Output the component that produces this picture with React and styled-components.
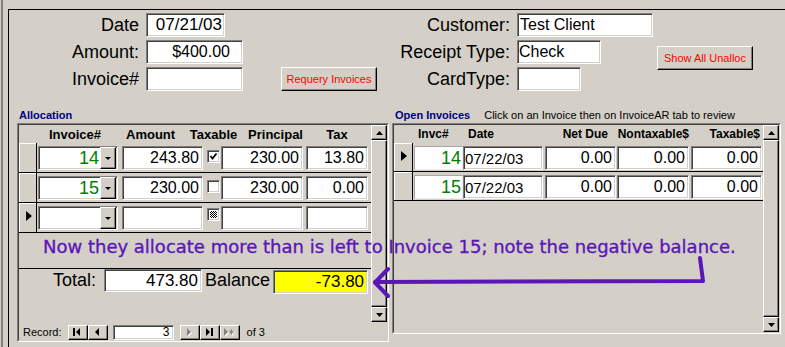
import React from "react"
import styled, { createGlobalStyle, css } from "styled-components"

const GlobalStyle = createGlobalStyle`
  html, body {
    margin: 0;
    padding: 0;
    background: #d4d0c8;
  }
  body {
    font-family: "Liberation Sans", Arial, sans-serif;
    overflow: hidden;
  }
  * {
    box-sizing: border-box;
  }
`

// classic 3D edges
const raised = css`
  background: #d4d0c8;
  border: 1px solid;
  border-color: #fff #000 #000 #fff;
  box-shadow: inset -1px -1px #808080;
`

const sunken = css`
  background: #fff;
  border: 1px solid;
  border-color: #808080 #fff #fff #808080;
  box-shadow: inset 1px 1px #404040, inset -1px -1px #d4d0c8;
`

const Screen = styled.div`
  position: relative;
  width: 785px;
  height: 347px;
  padding-left: 1px;
  overflow: hidden;
`

const Edge = styled.div`
  height: 100%;
  border-left: 2px solid #808080;
  padding: 9px 0 0 5px;
`

const Form = styled.div`
  height: 100%;
  border-top: 1px solid #000;
  border-left: 1px solid #000;
`

const TopArea = styled.div`
  display: flex;
  align-items: flex-start;
  padding-top: 3px;
`

const FieldGrid = styled.div`
  display: grid;
  grid-template-columns: 130px max-content;
  grid-auto-rows: 24px;
  column-gap: 7px;
  row-gap: 3px;
  align-items: center;
  margin-left: ${({ $ml }) => $ml}px;
`

const Label = styled.span`
  justify-self: end;
  font-size: 18px;
  line-height: 24px;
  white-space: nowrap;
`

const Field = styled.div`
  ${sunken};
  flex: none;
  justify-self: start;
  width: ${({ $w }) => $w}px;
  height: ${({ $h }) => $h || 24}px;
  margin-left: ${({ $ml }) => $ml || 0}px;
  margin-top: ${({ $mt }) => $mt || 0}px;
  display: flex;
  align-items: center;
  justify-content: ${({ $left }) => ($left ? "flex-start" : "flex-end")};
  padding: 0 ${({ $pr }) => ($pr === undefined ? 3 : $pr)}px 0 ${({ $pl }) => ($pl === undefined ? 3 : $pl)}px;
  font-size: ${({ $fs }) => $fs || 16}px;
  color: ${({ $green }) => ($green ? "#008000" : "#000")};
  background: ${({ $bg }) => $bg || "#fff"};
  white-space: nowrap;
  overflow: hidden;
  ${({ $flat }) =>
    $flat &&
    css`
      border-color: #a8a8a8 #ececec #ececec #a8a8a8;
      box-shadow: none;
    `}
`

const CmdButton = styled.button`
  ${raised};
  flex: none;
  width: 96px;
  height: 24px;
  margin: ${({ $mt }) => $mt}px 0 0 ${({ $ml }) => $ml}px;
  padding: 0;
  color: #ff0000;
  font-family: "Liberation Sans", Arial, sans-serif;
  font-size: 11px;
`

const Panels = styled.div`
  display: flex;
  align-items: flex-start;
  margin: 17px 0 0 8px;
`

const Panel = styled.section`
  display: flex;
  flex-direction: column;
  flex: none;
  width: ${({ $w }) => $w}px;
  margin-left: ${({ $ml }) => $ml || 0}px;
`

const PanelTitle = styled.div`
  height: 15px;
  display: flex;
  align-items: baseline;
  gap: 14px;
  padding-left: ${({ $pl }) => $pl}px;
  font-size: 11px;
  line-height: 15px;
  white-space: nowrap;
`

const TitleText = styled.span`
  color: #000080;
  font-weight: bold;
`

const Frame = styled.div`
  height: ${({ $h }) => $h}px;
  border: 1px solid;
  border-color: #808080 #fff #fff #808080;
`

const FrameInner = styled.div`
  height: 100%;
  display: flex;
  flex-direction: column;
  border: 1px solid;
  border-color: #404040 #d4d0c8 #d4d0c8 #404040;
`

const Body = styled.div`
  flex: 1;
  min-height: 0;
  display: flex;
`

const Sheet = styled.div`
  flex: 1;
  min-width: 0;
  display: flex;
  flex-direction: column;
`

const Detail = styled.div`
  height: ${({ $h }) => $h}px;
  display: flex;
  flex-direction: column;
`

const HeaderRow = styled.div`
  height: 18px;
  flex: none;
  display: flex;
  align-items: center;
  font-size: ${({ $fs }) => $fs}px;
  font-weight: bold;
`

const HeadCell = styled.div`
  flex: none;
  width: ${({ $w }) => $w}px;
  margin-left: ${({ $ml }) => $ml}px;
  display: flex;
  justify-content: ${({ $align }) => $align};
  padding: 0 ${({ $pr }) => $pr || 0}px 0 ${({ $pl }) => $pl || 0}px;
  white-space: nowrap;
`

const Row = styled.div`
  height: ${({ $h }) => $h}px;
  flex: none;
  display: flex;
  align-items: flex-start;
  border-bottom: 1px solid #000;
`

const Selector = styled.div`
  flex: none;
  width: ${({ $w }) => $w}px;
  align-self: stretch;
  border-right: 1px solid #000;
  box-shadow: inset 1px 1px #fff;
  padding: 4px 0 0 7px;
`

const SelectorBlank = styled.div`
  flex: none;
  width: ${({ $w }) => $w}px;
`

const DropButton = styled.div`
  ${raised};
  flex: none;
  width: 16px;
  height: 22px;
  margin-left: 1px;
  display: flex;
  align-items: center;
  justify-content: center;
  &::after {
    content: "";
    border-left: 3px solid transparent;
    border-right: 3px solid transparent;
    border-top: 3px solid #000;
  }
`

const CheckBox = styled.div`
  flex: none;
  width: 13px;
  height: 13px;
  margin: ${({ $mt }) => $mt}px 0 0 ${({ $ml }) => $ml}px;
  border: 1px solid;
  border-color: #808080 #fff #fff #808080;
  box-shadow: inset 1px 1px #404040, inset -1px -1px #d4d0c8;
  background: #fff;
  display: flex;
  align-items: center;
  justify-content: center;
`

const NullFill = styled.div`
  width: 7px;
  height: 7px;
  background-image: repeating-conic-gradient(#000 0 25%, #fff 0 50%);
  background-size: 2px 2px;
`

const Footer = styled.div`
  flex: 1;
  display: flex;
  align-items: flex-start;
  border-top: 1px solid #000;
`

const FooterLabel = styled.span`
  flex: none;
  width: ${({ $w }) => $w}px;
  margin-left: ${({ $ml }) => $ml || 0}px;
  text-align: right;
  padding-right: ${({ $pr }) => $pr || 0}px;
  font-size: 18px;
  line-height: 23px;
  white-space: nowrap;
`

const ScrollBar = styled.div`
  flex: none;
  width: 16px;
  display: flex;
  flex-direction: column;
`

const ScrollBtn = styled.div`
  ${raised};
  height: 15px;
  flex: none;
  display: flex;
  align-items: center;
  justify-content: center;
`

const Thumb = styled.div`
  ${raised};
  flex: 1;
`

const RecordBar = styled.div`
  height: 18px;
  flex: none;
  display: flex;
  align-items: flex-start;
  padding: 3px 0 0 4px;
  font-size: 11px;
  line-height: 15px;
`

const NavText = styled.span`
  margin-left: ${({ $ml }) => $ml || 0}px;
  white-space: nowrap;
`

const NavButton = styled.div`
  ${raised};
  flex: none;
  width: 20px;
  height: 15px;
  margin-left: ${({ $ml }) => $ml || 0}px;
  display: flex;
  align-items: center;
  justify-content: center;
`

const NavBox = styled.div`
  ${sunken};
  flex: none;
  width: 61px;
  height: 15px;
  margin-left: 5px;
  padding-right: 3px;
  text-align: right;
  font-size: 12px;
  line-height: 13px;
`

const Note = styled.div`
  position: absolute;
  left: 43px;
  top: 236px;
  font-family: "DejaVu Sans", Verdana, sans-serif;
  font-size: 18px;
  line-height: 21px;
  color: #5b16b8;
  -webkit-text-stroke: 0.35px #5b16b8;
  white-space: nowrap;
`

const Callout = styled.svg`
  position: absolute;
  left: 0;
  top: 0;
  pointer-events: none;
`

const allocCols = [
  { ml: 1, w: 80, head: "Invoice#", align: "center", pr: 6 },
  { ml: 4, w: 81, head: "Amount", align: "flex-start", pl: 4 },
  { ml: 4, w: 13, head: "Taxable", align: "center" },
  { ml: 1, w: 82, head: "Principal", align: "flex-end", pr: -2 },
  { ml: 3, w: 62, head: "Tax", align: "center" },
]

const openCols = [
  { ml: 1, w: 49, head: "Invc#", align: "flex-start", pl: 4 },
  { ml: 0, w: 80, head: "Date", align: "flex-start", pl: 5 },
  { ml: 2, w: 71, head: "Net Due", align: "flex-end", pr: 8 },
  { ml: 1, w: 72, head: "Nontaxable$", align: "flex-end", pr: -2 },
  { ml: 2, w: 71, head: "Taxable$", align: "flex-end", pr: 2 },
]

const allocRows = [
  { inv: "14", amount: "243.80", taxable: "on", principal: "230.00", tax: "13.80", mt: 7 },
  { inv: "15", amount: "230.00", taxable: "off", principal: "230.00", tax: "0.00", mt: 7 },
  { inv: "", amount: "", taxable: "null", principal: "", tax: "", mt: 5, current: true },
]

const openRows = [
  { inv: "14", date: "07/22/03", current: true },
  { inv: "15", date: "07/22/03" },
]

const Marker = () => (
  <svg width="6" height="10" viewBox="0 0 6 10">
    <polygon points="0,0 6,5 0,10" fill="#000" />
  </svg>
)

const Arrow = ({ up }) => (
  <svg width="7" height="4" viewBox="0 0 7 4">
    <polygon points={up ? "0,4 3.5,0 7,4" : "0,0 3.5,4 7,0"} fill="#000" />
  </svg>
)

const Scroller = () => (
  <ScrollBar>
    <ScrollBtn>
      <Arrow up />
    </ScrollBtn>
    <Thumb />
    <ScrollBtn>
      <Arrow />
    </ScrollBtn>
  </ScrollBar>
)

const glyphs = {
  first: (
    <>
      <rect x="1" y="0" width="2" height="8" />
      <polygon points="8,0 4,4 8,8" />
    </>
  ),
  prev: <polygon points="7,0 3,4 7,8" />,
  next: <polygon points="3,0 7,4 3,8" />,
  last: (
    <>
      <polygon points="2,0 6,4 2,8" />
      <rect x="7" y="0" width="2" height="8" />
    </>
  ),
  add: (
    <>
      <polygon points="0,0 4,4 0,8" />
      <path d="M7.5 1.5v5M5.3 2.7l4.4 2.6M5.3 5.3l4.4-2.6" stroke="currentColor" strokeWidth="1" />
    </>
  ),
}

const NavGlyph = ({ kind, disabled }) => (
  <svg width="11" height="9" viewBox="0 0 11 9">
    {disabled && (
      <g fill="#fff" color="#fff" transform="translate(1 1)">
        {glyphs[kind]}
      </g>
    )}
    <g fill={disabled ? "#808080" : "#000"} color={disabled ? "#808080" : "#000"}>
      {glyphs[kind]}
    </g>
  </svg>
)

const CheckMark = () => (
  <svg width="9" height="9" viewBox="0 0 9 9">
    <polyline points="1.5,4 3.5,6.5 7.5,1.5" fill="none" stroke="#000" strokeWidth="1.8" />
  </svg>
)

const Allocation = () => (
  <Panel $w={372}>
    <PanelTitle $pl={2}>
      <TitleText>Allocation</TitleText>
    </PanelTitle>
    <Frame $h={219}>
      <FrameInner>
        <Body>
          <Sheet>
            <Detail $h={143}>
              <HeaderRow $fs={13}>
                <SelectorBlank $w={18} />
                {allocCols.map((c) => (
                  <HeadCell key={c.head} $w={c.w} $ml={c.ml} $align={c.align} $pl={c.pl} $pr={c.pr}>
                    {c.head}
                  </HeadCell>
                ))}
              </HeaderRow>
              {allocRows.map((r, i) => (
                <Row key={i} $h={30}>
                  <Selector $w={18}>{r.current && <Marker />}</Selector>
                  <Field $w={80} $ml={1} $mt={3} $pr={1} $fs={18} $green>
                    {r.inv}
                    <DropButton />
                  </Field>
                  <Field $w={81} $ml={4} $mt={3}>
                    {r.amount}
                  </Field>
                  <CheckBox $ml={4} $mt={r.mt}>
                    {r.taxable === "on" && <CheckMark />}
                    {r.taxable === "null" && <NullFill />}
                  </CheckBox>
                  <Field $w={82} $ml={1} $mt={3}>
                    {r.principal}
                  </Field>
                  <Field $w={62} $ml={3} $mt={3}>
                    {r.tax}
                  </Field>
                </Row>
              ))}
            </Detail>
            <Footer>
              <FooterLabel $w={85} $pr={8}>
                Total:
              </FooterLabel>
              <Field $w={98} $h={23} $fs={17}>
                473.80
              </Field>
              <FooterLabel $ml={3}>Balance</FooterLabel>
              <Field $w={95} $ml={3} $mt={1} $fs={17} $bg="#ffff00">
                -73.80
              </Field>
            </Footer>
          </Sheet>
          <Scroller />
        </Body>
        <RecordBar>
          <NavText>Record:</NavText>
          <NavButton $ml={6}>
            <NavGlyph kind="first" />
          </NavButton>
          <NavButton>
            <NavGlyph kind="prev" />
          </NavButton>
          <NavBox>3</NavBox>
          <NavButton $ml={6}>
            <NavGlyph kind="next" disabled />
          </NavButton>
          <NavButton>
            <NavGlyph kind="last" />
          </NavButton>
          <NavButton>
            <NavGlyph kind="add" disabled />
          </NavButton>
          <NavText $ml={7}>of 3</NavText>
        </RecordBar>
      </FrameInner>
    </Frame>
  </Panel>
)

const OpenInvoices = () => (
  <Panel $w={389} $ml={3}>
    <PanelTitle $pl={3}>
      <TitleText>Open Invoices</TitleText>
      <span>Click on an Invoice then on InvoiceAR tab to review</span>
    </PanelTitle>
    <Frame $h={211}>
      <FrameInner>
        <Body>
          <Sheet>
            <HeaderRow $fs={12}>
              <SelectorBlank $w={19} />
              {openCols.map((c) => (
                <HeadCell key={c.head} $w={c.w} $ml={c.ml} $align={c.align} $pl={c.pl} $pr={c.pr}>
                  {c.head}
                </HeadCell>
              ))}
            </HeaderRow>
            {openRows.map((r) => (
              <Row key={r.inv} $h={29}>
                <Selector $w={19}>{r.current && <Marker />}</Selector>
                <Field $w={49} $ml={1} $mt={3} $pr={1} $fs={18} $green $flat>
                  {r.inv}
                </Field>
                <Field $w={80} $mt={3} $pl={1} $fs={15} $left>
                  {r.date}
                </Field>
                <Field $w={71} $ml={2} $mt={3}>
                  0.00
                </Field>
                <Field $w={72} $ml={1} $mt={3}>
                  0.00
                </Field>
                <Field $w={71} $ml={2} $mt={3}>
                  0.00
                </Field>
              </Row>
            ))}
          </Sheet>
          <Scroller />
        </Body>
      </FrameInner>
    </Frame>
  </Panel>
)

export default function App() {
  return (
    <>
      <GlobalStyle />
      <Screen>
        <Edge>
          <Form>
            <TopArea>
              <FieldGrid $ml={0}>
                <Label>Date</Label>
                <Field $w={79} $fs={17} $pr={2}>
                  07/21/03
                </Field>
                <Label>Amount:</Label>
                <Field $w={97} $pr={12}>
                  $400.00
                </Field>
                <Label>Invoice#</Label>
                <Field $w={97} />
              </FieldGrid>
              <CmdButton $ml={38} $mt={54}>
                Requery Invoices
              </CmdButton>
              <FieldGrid $ml={3}>
                <Label>Customer:</Label>
                <Field $w={136} $left $pl={2}>
                  Test Client
                </Field>
                <Label>Receipt Type:</Label>
                <Field $w={84} $left $pl={1}>
                  Check
                </Field>
                <Label>CardType:</Label>
                <Field $w={64} />
              </FieldGrid>
              <CmdButton $ml={4} $mt={33}>
                Show All Unalloc
              </CmdButton>
            </TopArea>
            <Panels>
              <Allocation />
              <OpenInvoices />
            </Panels>
          </Form>
        </Edge>
        <Note>Now they allocate more than is left to Invoice 15; note the negative balance.</Note>
        <Callout width="785" height="347" viewBox="0 0 785 347">
          <path
            d="M700 258 L703 281 L375 282 M388 269 L375 282.5 L388 296"
            fill="none"
            stroke="#5b16b8"
            strokeWidth="4"
            strokeLinecap="round"
            strokeLinejoin="round"
          />
        </Callout>
      </Screen>
    </>
  )
}
